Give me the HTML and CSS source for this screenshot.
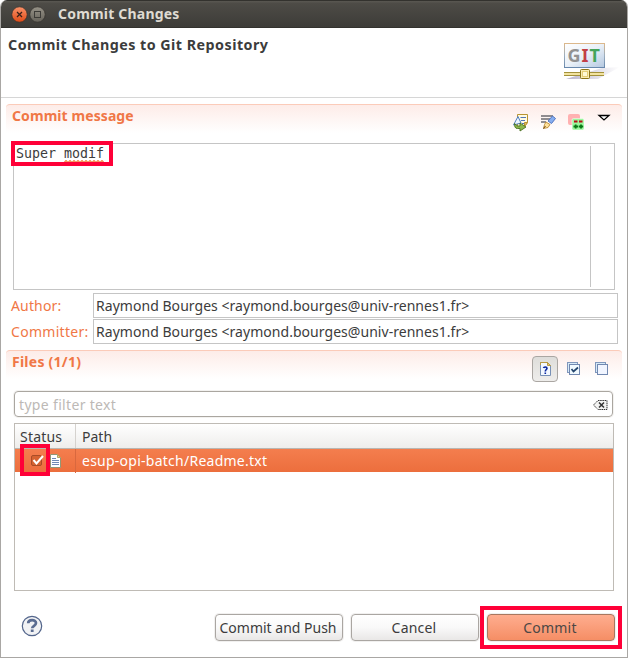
FILE: index.html
```html
<!DOCTYPE html>
<html lang="en">
<head>
<meta charset="utf-8">
<title>Commit Changes</title>
<link rel="stylesheet" href="styles.css">
</head>
<body>
<div class="window">
  <header class="titlebar">
    <svg class="window-buttons" width="38" height="20" viewBox="0 0 38 20">
      <defs>
        <linearGradient id="close" x1="0" y1="0" x2="0" y2="1"><stop offset="0" stop-color="#fa9269"/><stop offset="1" stop-color="#df4a16"/></linearGradient>
        <linearGradient id="max" x1="0" y1="0" x2="0" y2="1"><stop offset="0" stop-color="#969287"/><stop offset="1" stop-color="#65625a"/></linearGradient>
      </defs>
      <circle cx="9.500" cy="10.500" r="7.700" fill="url(#close)" stroke="#33312d" stroke-width=".7"/>
      <path d="M7 8l5 5M12 8l-5 5" stroke="#3a2119" stroke-width="1.300"/>
      <circle cx="27.500" cy="10.500" r="7.700" fill="url(#max)" stroke="#33312d" stroke-width=".7"/>
      <rect x="24.500" y="7.500" width="6" height="6" fill="none" stroke="#3c3b37"/>
    </svg>
    <span class="window-title">Commit Changes</span>
  </header>

  <section class="banner">
    <h1>Commit Changes to Git Repository</h1>
    <svg class="git-logo" width="60" height="42" viewBox="0 0 60 42">
      <defs>
        <linearGradient id="board" x1="0" y1="0" x2="1" y2="1"><stop offset="0" stop-color="#fff"/><stop offset=".5" stop-color="#e9f0f8"/><stop offset="1" stop-color="#b4c8e0"/></linearGradient>
        <linearGradient id="frame" x1="0" y1="0" x2="0" y2="1"><stop offset="0" stop-color="#dcb88b"/><stop offset=".5" stop-color="#9caebe"/><stop offset="1" stop-color="#6888ad"/></linearGradient>
        <linearGradient id="shadow" x1="0" y1="0" x2="1" y2="0"><stop offset="0" stop-color="#b9b4cb"/><stop offset="1" stop-color="#fff"/></linearGradient>
      </defs>
      <path d="M6 38L42 27L60 26L38 38z" fill="url(#shadow)"/>
      <rect x="4.500" y="2.500" width="40" height="24" fill="url(#board)" stroke="url(#frame)"/>
      <text class="git-letters" x="7.500" y="21"><tspan fill="#929292">G</tspan><tspan x="21.500" fill="#c23f46">I</tspan><tspan x="29.500" fill="#43a45c">T</tspan></text>
      <path d="M4 31.500h40M4 34.500h40" stroke="#a3913b"/>
      <path d="M4 33h40" stroke="#f2e3a0" stroke-width="2"/>
      <rect x="20.500" y="28.500" width="9" height="9" rx="1" fill="#f9edb2" stroke="#8d7517"/>
      <rect x="22.500" y="30.500" width="5" height="5" fill="#fff9d4" stroke="#e5cd75"/>
    </svg>
  </section>

  <section class="message">
    <div class="section-head">
      <h2>Commit message</h2>
      <svg class="message-tools" width="104" height="20" viewBox="0 0 104 20">
        <path d="M5.500 2.500h10v8l-3 4h-7z" fill="#fffbe3" stroke="#b99330"/>
        <path d="M8.500 5.500h5.500M9 8.500h4M10 11.500h2" stroke="#5275b7"/>
        <path d="M15.500 10.500h-3v4z" fill="#e1bc64" stroke="#b99330"/>
        <path d="M1.500 13L6 4.500l3 6.500z" fill="#edf6ff" stroke="#4f7fc0"/>
        <path d="M2.500 11.500l3 2.500h2.500v-3l6 4-6 4v-2.500H5.500c-2.500 0-3-2-3-5z" fill="#8cb84b" stroke="#496f25" stroke-width=".9"/>
        <path d="M29 4h12M29 7h9M29 10h5" stroke="#23262e" stroke-width="1.200"/>
        <path d="M36 9l4.500-5 3 2.500-4 5z" fill="#86aef0" stroke="#4f75c1"/>
        <path d="M34 10l4 2.500-2 3-4.500 1 1-4z" fill="#ffe19a" stroke="#af7b25" stroke-width=".8"/>
        <path d="M31.500 16.500l2-2.500" stroke="#704713"/>
        <rect x="56" y="2" width="12" height="11" rx="2" fill="#ffb1b1"/>
        <rect x="60" y="6.500" width="12" height="11.500" rx="1.500" fill="#9bf79d" stroke="#fff" stroke-width=".5"/>
        <path d="M62 9.500h3.500M67 9.500h3.500" stroke="#b60d17" stroke-width="2"/>
        <path d="M61.500 14.500h4.500M63.700 12.500v4M66.700 14.500h4.500M69 12.500v4" stroke="#087915" stroke-width="1.800"/>
        <path d="M87 3.500h10L92 8z" fill="#fff" stroke="#000" stroke-width="1.300"/>
      </svg>
    </div>
    <div class="editor">
      <div class="editor-text"><span class="line">Super <span class="misspelt">modif<svg class="squiggle" width="40" height="3" viewBox="0 0 40 3"><path d="M0 2.500l2-2 2 2 2-2 2 2 2-2 2 2 2-2 2 2 2-2 2 2 2-2 2 2 2-2 2 2 2-2 2 2 2-2 2 2 2-2 2 2" fill="none" stroke="#f28a4c" stroke-width="1.200"/></svg></span><i class="mark mark-message"></i></span></div>
      <div class="editor-gutter"></div>
    </div>
    <div class="people">
      <label><span class="author">Author:</span></label><div class="field"><span>Raymond Bourges &lt;raymond.bourges@univ-rennes1.fr&gt;</span></div>
      <label><span class="committer">Committer:</span></label><div class="field"><span>Raymond Bourges &lt;raymond.bourges@univ-rennes1.fr&gt;</span></div>
    </div>
  </section>

  <section class="files">
    <div class="section-head">
      <h2 class="files-title">Files (1/1)</h2>
      <div class="file-tools">
        <button class="toggle"><svg width="14" height="16" viewBox="0 0 14 16"><path d="M2.500 1.500h7l3 3v10h-10z" fill="#f3f8ff" stroke="#7890b5"/><path d="M2.500 4V1.500h7l3 3" fill="none" stroke="#ba9b43"/><path d="M9.500 1.500v3h3z" fill="#e5c777" stroke="#ba9b43"/><path d="M5.500 7c.3-1.300 3.500-1.300 3.500.2C9 8.500 7.300 8.600 7.300 10.500M7.300 11.500V13" fill="none" stroke="#0926a0" stroke-width="1.600"/></svg></button>
        <svg width="14" height="14" viewBox="0 0 14 14"><rect x=".5" y=".5" width="10" height="10" fill="#d7eaf7" stroke="#8097bc"/><rect x="2.500" y="2.500" width="10" height="10" fill="#f1faff" stroke="#7188b0"/><path d="M4.500 7l2 2.500L11 5.500" fill="none" stroke="#24466e" stroke-width="1.700"/></svg>
        <svg width="14" height="14" viewBox="0 0 14 14"><rect x=".5" y=".5" width="10" height="10" fill="#d7eaf7" stroke="#8097bc"/><rect x="2.500" y="2.500" width="10" height="10" fill="#f1f5ff" stroke="#7188b0"/></svg>
      </div>
    </div>
    <div class="filter">
      <span>type filter text</span>
      <svg width="15" height="11" viewBox="0 0 15 11"><path d="M5 .5h9v9H5L.5 5z" fill="#f4f4f3" stroke="#333" stroke-dasharray="1.500 .7"/><path d="M6 2.500l5 5M11 2.500l-5 5" stroke="#333" stroke-width="1.500"/></svg>
    </div>
    <div class="table">
      <div class="row head"><div class="cell"><span class="status">Status</span></div><div class="cell"><span class="path">Path</span></div></div>
      <div class="row selected">
        <div class="cell status-cell">
          <span class="check"><svg width="14" height="13" viewBox="0 0 14 13"><rect x="1.500" y="1.500" width="10" height="10" rx="1.500" fill="#d66332" stroke="#a94c27"/><path d="M3.500 6l3 3.500L13 2" fill="none" stroke="#fff" stroke-width="2"/></svg><i class="mark mark-check"></i></span>
          <svg class="doc" width="11" height="14" viewBox="0 0 11 14"><path d="M.5.500h7l3 3v10H.5z" fill="#fff" stroke="#919775"/><path d="M7.500.5v3h3z" fill="#e8d28e" stroke="#b5a35f"/><path d="M2 4.500h4M2 6.500h7M2 8.500h7M2 10.500h7" stroke="#6f8ab5"/></svg>
        </div>
        <div class="cell"><span class="filename">esup-opi-batch/Readme.txt</span></div>
      </div>
    </div>
  </section>

  <footer class="actions">
    <svg class="help" width="22" height="22" viewBox="0 0 22 22"><circle cx="11" cy="11" r="9.700" fill="#f1f2f4" stroke="#53658b" stroke-width="1.200"/><path d="M7.200 8.300C7.200 4 15 4 15 8.100c0 2.700-3.800 2.600-3.800 5.200" fill="none" stroke="#5a6c91" stroke-width="2.700"/><rect x="9.800" y="14.500" width="2.800" height="2.500" fill="#5a6c91"/></svg>
    <button class="btn"><span class="push">Commit and Push</span></button>
    <button class="btn"><span class="cancel">Cancel</span></button>
    <button class="btn primary"><span class="commit">Commit</span><i class="mark mark-commit"></i></button>
  </footer>
</div>
</body>
</html>
```
FILE: styles.css
```css
* { box-sizing: border-box; }
body { margin: 0; background: #fff; color: #3c3c3c; font: 14px/20px "Noto Sans", sans-serif; }
h1, h2 { margin: 0; font-weight: 700; }
svg { display: block; flex: none; }
span { white-space: nowrap; }
.window { width: 628px; height: 658px; display: flex; flex-direction: column; background: #fff; border: solid #a9a7a4; border-width: 0 1px 1px; border-radius: 7px 7px 0 0; overflow: hidden; }
.titlebar { flex: none; height: 28px; margin: 0 -1px; padding: 4px 0 0 10px; display: flex; background: linear-gradient(#5a5852, #4d4b46 10%, #3d3c38); border: solid #33322e; border-width: 1px 0; }
.titlebar .window-buttons { margin-top: -1px; }
.window-title { margin: -1px 0 0 10px; color: #dfdbd2; font-weight: 700; letter-spacing: .2px; }
.banner { flex: none; height: 70px; padding: 7px 7px 0; display: flex; justify-content: space-between; border-bottom: 1px solid #d6d6d6; }
h1 { font-size: 14.300px; line-height: 20px; letter-spacing: .47px; }
.git-logo { margin: 6px 0 0; }
.git-letters { font: 700 18px "Noto Sans", sans-serif; }
.message { flex: none; height: 252px; padding: 6px 5px 0; }
.section-head { height: 39px; padding: 1px 6px; display: flex; justify-content: space-between; background: linear-gradient(#fdece8, #fff 28px); border-top: 1px solid #fbcbb9; border-radius: 4px 4px 0 0; }
h2 { color: #f07746; font-size: 14px; line-height: 20px; letter-spacing: .08px; }
.files-title { letter-spacing: .25px; }
.message-tools { margin: 6px 0 0; }
.editor { width: 602px; height: 147px; margin: 0 0 3px 7px; display: flex; border: 1px solid #c5c5c5; }
.editor-text { width: 577px; margin: 2px 0; border-right: 1px solid #c5c5c5; }
.line { position: relative; display: block; height: 16px; padding-left: 2px; font: 13.300px/15px "DejaVu Sans Mono", monospace; white-space: pre; }
.misspelt { position: relative; }
.squiggle { position: absolute; left: 0; top: 14px; }
.mark { position: absolute; border: 4px solid #ff0038; pointer-events: none; }
.mark-message { left: -3px; top: -5px; width: 102px; height: 25px; }
.people { width: 607px; margin-left: 5px; display: grid; grid-template-columns: 82px 525px; row-gap: 1px; line-height: 23px; }
.people label { padding-top: 1px; color: #f07746; }
.author { letter-spacing: .15px; }
.committer { letter-spacing: .3px; }
.field { height: 25px; padding-left: 2px; border: 1px solid #c5c5c5; letter-spacing: .04px; }
.files { flex: none; height: 241px; padding: 0 5px; }
.files .section-head { height: 41px; padding-top: 1px; }
.file-tools { display: flex; gap: 14px; align-items: center; height: 34px; padding-right: 7px; }
.toggle { width: 26px; height: 26px; padding: 0; display: flex; align-items: center; justify-content: center; border: 1px solid #aaa6a2; border-radius: 4px; background: linear-gradient(#deddda, #eeedeb); margin: -1px -5px 0 0; }
.filter { width: 599px; height: 26px; margin: 0 0 6px 8px; padding: 0 4px; display: flex; align-items: center; justify-content: space-between; color: #bdb9b6; border: 1px solid #aaa6a0; border-radius: 4px; box-shadow: 0 0 0 1px #f3f2f0; letter-spacing: .33px; }
.filter span { padding-top: 2px; }
.filter svg { margin-top: 2px; }
.table { width: 600px; height: 168px; margin-left: 8px; border: 1px solid #bfbbb5; }
.row { display: grid; grid-template-columns: 61px 1fr; }
.cell { padding-left: 6px; line-height: 24px; }
.cell:first-child { padding-left: 5px; border-right: 1px solid #d5d2ce; }
.head { height: 25px; background: linear-gradient(#fff, #eeedeb); border-bottom: 1px solid #b9b5b0; }
.head .cell { line-height: 26px; height: 24px; }
.status { letter-spacing: .2px; }
.selected { height: 23px; color: #fff; background: linear-gradient(#f47e4e, #ec6e3d); }
.selected .cell:first-child { border-color: #d9683e; }
.status-cell { display: flex; align-items: center; gap: 5px; }
.filename { letter-spacing: .25px; }
.check { position: relative; margin: -1px 0 0 10px; }
.mark-check { left: -10px; top: -10px; width: 30px; height: 32px; }
.doc { margin-left: 1px; }
.actions { flex: 1; display: flex; align-items: flex-start; padding: 23px 12px 0 20px; gap: 8px; }
.help { margin: 1px auto 0 0; }
.btn { position: relative; width: 128px; height: 27px; padding: 0; color: #3c3c3c; font: 14px/23px "Noto Sans", sans-serif; background: linear-gradient(#fff, #f9f9f9 50%, #e9e7e6); border: 1px solid #aaa6a2; border-radius: 4px; box-shadow: 0 0 0 1px #f1f0ef; }
.btn span { position: relative; left: -1px; }
.cancel, .commit { letter-spacing: .2px; }
.primary { background: linear-gradient(#ffad8f, #f58e65); border-color: #a9775f; color: #4c4745; }
.mark-commit { left: -8px; top: -9px; width: 142px; height: 43px; }
```
